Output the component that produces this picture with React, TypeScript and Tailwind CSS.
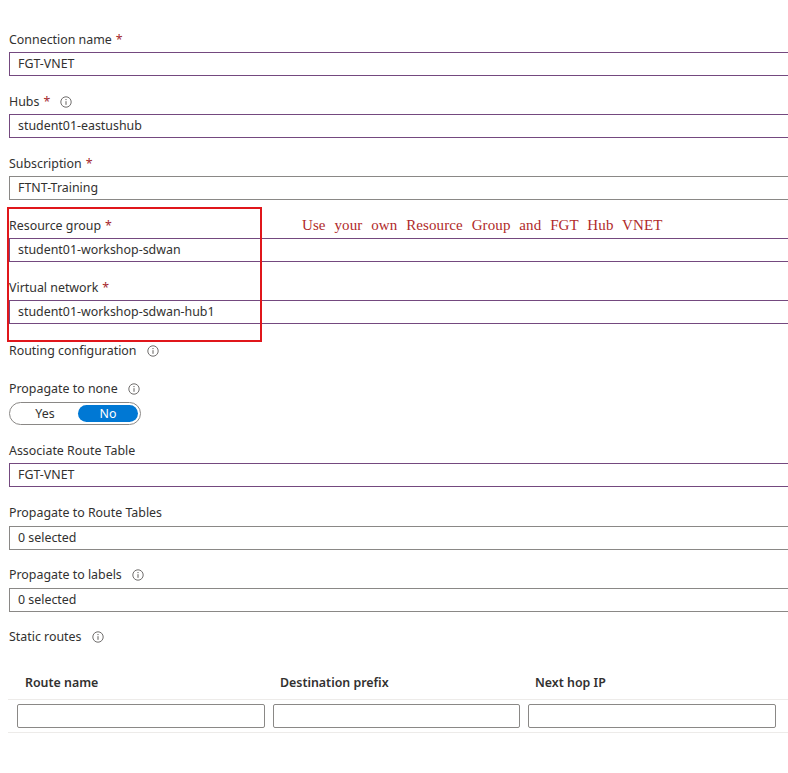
import React from 'react';

const font = { fontFamily: '"Noto Sans", "Open Sans", sans-serif' };

const Info: React.FC = () => (
  <svg width="12" height="12" viewBox="0 0 12 12" className="inline-block ml-[10px] -mt-[2px] align-middle">
    <circle cx="6" cy="6" r="5.2" fill="none" stroke="#605e5c" strokeWidth="0.9" />
    <circle cx="6" cy="3.6" r="0.7" fill="#605e5c" />
    <path d="M6 5.2v3.6" stroke="#605e5c" strokeWidth="1" />
  </svg>
);

const Label: React.FC<{ text: string; required?: boolean; info?: boolean; className?: string }> = ({
  text,
  required,
  info,
  className = '',
}) => (
  <div className={`h-[20px] leading-[22px] text-[12.4px] text-[#323130] ${className}`}>
    {text}
    {required && <span className="text-[#a4262c] ml-[4px]">*</span>}
    {info && <Info />}
  </div>
);

const Input: React.FC<{ value: string; grey?: boolean; className?: string }> = ({ value, grey, className = '' }) => (
  <div
    className={`h-[24px] border border-r-0 ${grey ? 'border-[#8a8886]' : 'border-[#74497f]'} pl-[8px] leading-[22px] text-[12.4px] text-[#323130] ${className}`}
  >
    {value}
  </div>
);

export default function App() {
  return (
    <div className="relative w-[788px] h-[773px] bg-white overflow-hidden pl-[9px]" style={font}>
      <Label text="Connection name" required className="mt-[29px]" />
      <Input value="FGT-VNET" className="mt-[3px]" />

      <Label text="Hubs" required info className="mt-[15px]" />
      <Input value="student01-eastushub" className="mt-[3px]" />

      <Label text="Subscription" required className="mt-[15px]" />
      <Input value="FTNT-Training" grey className="mt-[3px]" />

      <Label text="Resource group" required className="mt-[15px]" />
      <Input value="student01-workshop-sdwan" className="mt-[3px]" />

      <Label text="Virtual network" required className="mt-[15px]" />
      <Input value="student01-workshop-sdwan-hub1" className="mt-[3px]" />

      <Label text="Routing configuration" info className="mt-[16px]" />

      <Label text="Propagate to none" info className="mt-[18px]" />
      <div className="mt-[4px] w-[132px] h-[23px] rounded-full border border-[#8a8886] flex items-center p-[2px] text-[12.4px]">
        <div className="flex-1 text-center text-[#323130] leading-[17px]">Yes</div>
        <div className="w-[60px] h-[17px] rounded-full bg-[#0078d4] text-white text-center leading-[17px]">No</div>
      </div>

      <Label text="Associate Route Table" className="mt-[15px]" />
      <Input value="FGT-VNET" className="mt-[3px]" />

      <Label text="Propagate to Route Tables" className="mt-[15px]" />
      <Input value="0 selected" grey className="mt-[4px]" />

      <Label text="Propagate to labels" info className="mt-[14px]" />
      <Input value="0 selected" grey className="mt-[4px]" />

      <Label text="Static routes" info className="mt-[14px]" />

      {/* Static routes table */}
      <div className="mt-[26px] -ml-[1px]">
        <div className="grid grid-cols-[256px_255px_1fr] pl-[16px] h-[20px] leading-[22px] text-[12.4px] font-semibold text-[#323130]">
          <div className="pl-[1px]">Route name</div>
          <div>Destination prefix</div>
          <div>Next hop IP</div>
        </div>
        <div className="mt-[7px] border-t border-b border-[#edebe9] py-[4px] pl-[9px] flex gap-[8px]">
          <div className="w-[248px] h-[24px] border border-[#8a8886] rounded-[2px]" />
          <div className="w-[247px] h-[24px] border border-[#8a8886] rounded-[2px]" />
          <div className="w-[248px] h-[24px] border border-[#8a8886] rounded-[2px]" />
        </div>
      </div>

      {/* annotation */}
      <div className="absolute left-[7px] top-[207px] w-[255px] h-[135px] border-2 border-[#e0161b] pointer-events-none" />
      <div
        className="absolute left-[302px] top-[215px] text-[15px] leading-[20px] text-[#b02a2a] tracking-[0.1px] [word-spacing:5px]"
        style={{ fontFamily: '"Liberation Serif", serif' }}
      >
        Use your own Resource Group and FGT Hub VNET
      </div>
    </div>
  );
}
